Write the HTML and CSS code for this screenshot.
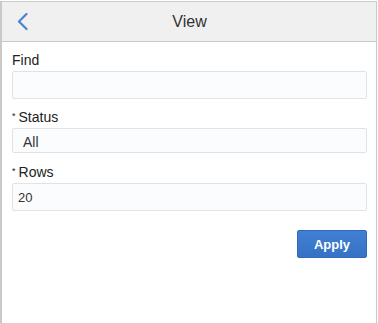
FILE: index.html
```html
<!DOCTYPE html>
<html>
<head>
<meta charset="utf-8">
<link rel="stylesheet" href="styles.css">
</head>
<body>
<div class="frame">
  <header class="header">
    <button class="back" aria-label="Back">
      <svg width="12" height="18" viewBox="0 0 12 18"><path d="M9.5 1 L2 8.5 L9.5 16" fill="none" stroke="#4a84d4" stroke-width="2.2" stroke-linecap="round" stroke-linejoin="round"/></svg>
    </button>
    <div class="title">View</div>
  </header>
  <main class="form">
    <div class="field f1">
      <label class="label">Find</label>
      <div class="input tall"></div>
    </div>
    <div class="field f2">
      <label class="label"><span class="req">*</span>Status</label>
      <div class="input select">All</div>
    </div>
    <div class="field f3">
      <label class="label"><span class="req">*</span>Rows</label>
      <div class="input tall num">20</div>
    </div>
    <div class="actions">
      <button class="apply">Apply</button>
    </div>
  </main>
</div>
</body>
</html>
```
FILE: styles.css
```css
html, body {
  margin: 0;
  padding: 0;
  background: #fff;
}
body {
  font-family: "Liberation Sans", Arial, sans-serif;
  color: #333;
}
.frame {
  box-sizing: border-box;
  width: 377px;
  height: 323px;
  margin-top: 1px;
  border-left: 2px solid #c9c9c9;
  border-right: 1px solid #c9c9c9;
  border-top: 1px solid #c9c9c9;
}
.header {
  position: relative;
  height: 39px;
  background: #f0f0f0;
  border-bottom: 1px solid #c9c9c9;
  display: flex;
  align-items: center;
  justify-content: center;
}
.back {
  position: absolute;
  left: 15px;
  top: 11px;
  padding: 0;
  border: 0;
  background: none;
  display: flex;
}
.title {
  font-size: 16px;
  color: #333;
  margin-left: 1px;
  margin-top: 1px;
}
.form {
  padding: 10px 9px 0 10px;
  display: flex;
  flex-direction: column;
}
.field {
  display: flex;
  flex-direction: column;
}
.label {
  font-size: 14px;
  color: #222;
  height: 17px;
  line-height: 17px;
  display: flex;
  align-items: flex-start;
}
.req {
  font-size: 9px;
  line-height: 11px;
  margin-top: 2px;
  margin-right: 3px;
}
.input {
  box-sizing: border-box;
  height: 25px;
  margin-top: 2px;
  border: 1px solid #dfe3e8;
  border-radius: 2px;
  background: #fbfcfd;
  font-size: 14px;
  display: flex;
  align-items: center;
}
.input.tall {
  height: 28px;
}
.f1 .input {
  margin-bottom: 10px;
}
.f2 .input {
  margin-bottom: 11px;
}
.select {
  padding-left: 10px;
  padding-top: 2px;
  color: #333;
}
.num {
  padding-left: 5px;
  font-size: 13px;
  color: #333;
}
.actions {
  display: flex;
  justify-content: flex-end;
  margin-top: 19px;
}
.apply {
  width: 70px;
  height: 28px;
  border: 1px solid #3568b8;
  border-radius: 2px;
  background: linear-gradient(#4080d4, #3671c4);
  color: #fff;
  font-family: "Liberation Sans", Arial, sans-serif;
  font-weight: bold;
  font-size: 13px;
  padding: 0;
}
```
